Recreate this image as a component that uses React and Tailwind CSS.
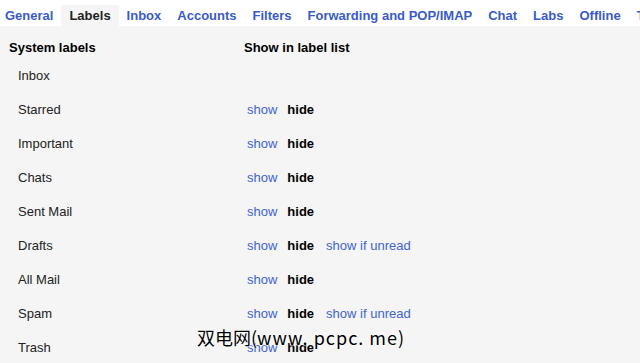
import React from "react";

const tabs = ["General", "Labels", "Inbox", "Accounts", "Filters", "Forwarding and POP/IMAP", "Chat", "Labs", "Offline", "Themes"];

const rows = [
  { name: "Inbox" },
  { name: "Starred", opts: true },
  { name: "Important", opts: true },
  { name: "Chats", opts: true },
  { name: "Sent Mail", opts: true },
  { name: "Drafts", opts: true, unread: true },
  { name: "All Mail", opts: true },
  { name: "Spam", opts: true, unread: true },
  { name: "Trash", opts: true },
];

export default function App() {
  return (
    <div className="relative w-[640px] h-[363px] overflow-hidden bg-[#f5f5f5] font-['Liberation_Sans',Arial,sans-serif] text-[13px] text-[#222]">
      <div className="flex items-end h-[26px] bg-white ml-[-3px] whitespace-nowrap">
        {tabs.map((t) => (
          <div
            key={t}
            className={`h-[21px] px-2 pt-[3px] leading-[16px] font-bold ${t === "Labels" ? "bg-[#f5f5f5] text-[#222]" : "text-[#3a5bc7]"}`}
          >
            {t}
          </div>
        ))}
      </div>

      <div className="flex h-[33px] pt-[14px] leading-[16px] font-bold text-black">
        <div className="w-[244px] pl-[9px]">System labels</div>
        <div>Show in label list</div>
      </div>

      {rows.map((r) => (
        <div key={r.name} className="flex items-center h-[34px] leading-[16px]">
          <div className="w-[247px] pl-[18px]">{r.name}</div>
          {r.opts && (
            <div className="flex">
              <span className="text-[#3f63d3] mr-[10px]">show</span>
              <span className="font-bold text-black mr-[12px]">hide</span>
              {r.unread && <span className="text-[#3f63d3]">show if unread</span>}
            </div>
          )}
        </div>
      ))}

      <div className="absolute left-[197px] top-[326px] text-[18px] leading-[22px] text-black font-['Noto_Sans_CJK_SC',sans-serif] [text-shadow:0_0_2px_#fff,0_0_2px_#fff,0_0_2px_#fff]">
        双电网(<span className="tracking-[1px]">www. pcpc. me</span>)
      </div>
    </div>
  );
}
